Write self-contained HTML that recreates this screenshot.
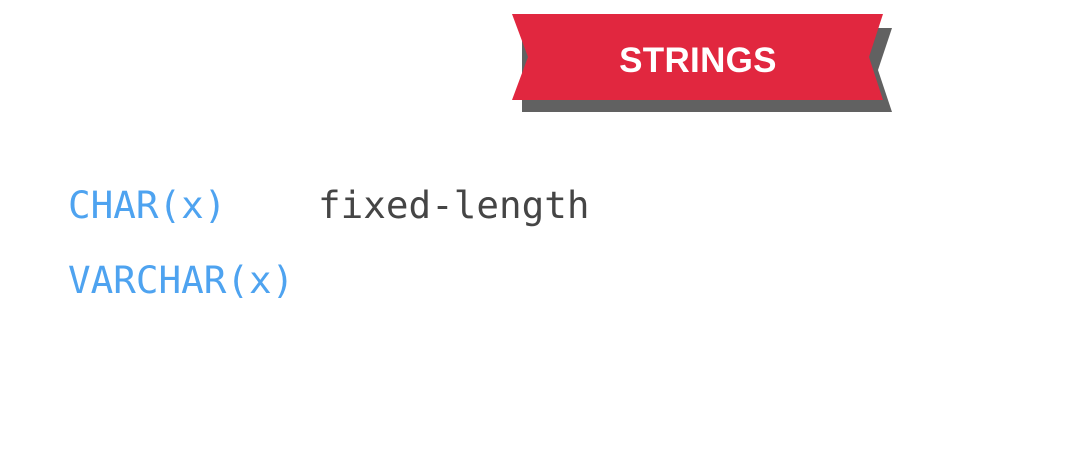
<!DOCTYPE html>
<html><head><style>
html,body{margin:0;padding:0;background:#fff;width:1087px;height:466px;overflow:hidden;position:relative}
.t{position:absolute;font-family:"DejaVu Sans Mono",monospace;font-size:37.6px;line-height:1;white-space:pre}
</style></head><body>
<svg width="1087" height="466" style="position:absolute;left:0;top:0">
<polygon points="522,28 892,28 878,70 892,112 522,112" fill="#616161"/>
<polygon points="512,14 883,14 869,57 883,100 512,100 528,57" fill="#e1273f"/>
<text x="698" y="72" text-anchor="middle" fill="#fff" font-family="Liberation Sans, sans-serif" font-weight="bold" font-size="35" letter-spacing="0.3">STRINGS</text>
</svg>
<div class="t" style="left:68px;top:187px;color:#4ea3f0">CHAR(x)</div>
<div class="t" style="left:318px;top:187px;color:#454545">fixed-length</div>
<div class="t" style="left:68px;top:262px;color:#4ea3f0">VARCHAR(x)</div>
</body></html>
